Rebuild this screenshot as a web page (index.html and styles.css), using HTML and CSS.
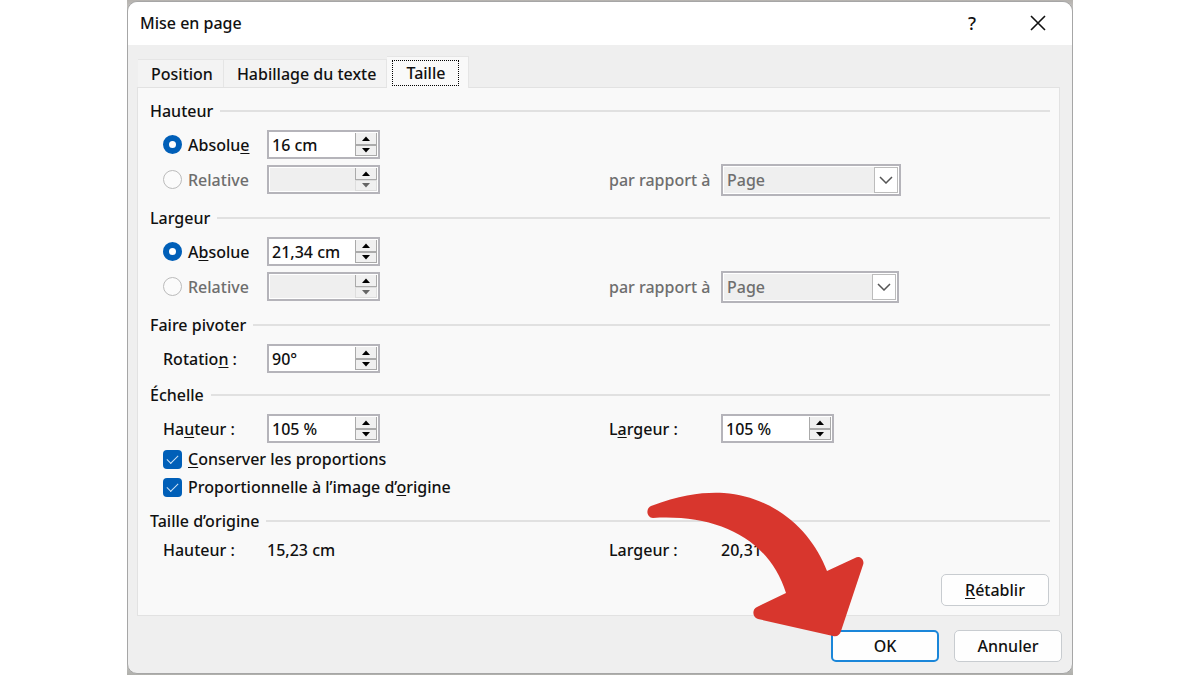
FILE: index.html
```html
<!DOCTYPE html>
<html lang="fr">
<head>
<meta charset="utf-8">
<title>Mise en page</title>
<link rel="stylesheet" href="styles.css">
</head>
<body>
<svg class="sprite" aria-hidden="true">
  <symbol id="up" viewBox="0 0 10 5"><path d="M1 5 5 0.5 9 5Z" fill="currentColor"/></symbol>
  <symbol id="down" viewBox="0 0 10 5"><path d="M1 0 5 4.5 9 0Z" fill="currentColor"/></symbol>
  <symbol id="chevron" viewBox="0 0 14 8"><path d="M1 1 7 7 13 1" fill="none" stroke="currentColor" stroke-width="1.5"/></symbol>
</svg>
<div class="backdrop">
<main class="dialog" role="dialog" aria-labelledby="title">
  <header class="titlebar">
    <h1 class="title" id="title">Mise en page</h1>
    <button class="caption-button help" aria-label="Aide">?</button>
    <button class="caption-button" aria-label="Fermer"><svg width="16" height="16" viewBox="0 0 16 16"><path d="M1 1 15 15M15 1 1 15" stroke="currentColor" stroke-width="1.6"/></svg></button>
  </header>
  <div class="content">
    <nav class="tabs" role="tablist">
      <button class="tab" role="tab">Position</button>
      <button class="tab" role="tab">Habillage du texte</button>
      <button class="tab tab-active" role="tab" aria-selected="true"><span class="focus">Taille</span></button>
    </nav>
    <form class="panel">
      <section class="section">
        <h2 class="heading">Hauteur</h2>
        <div class="fields">
          <label class="option"><input class="radio" type="radio" name="height" checked><span>Absolu<u>e</u></span></label>
          <div class="spinner"><input class="value" type="text" value="16 cm" aria-label="Hauteur absolue"><span class="steps"><button type="button" class="step" aria-label="Augmenter"><svg><use href="#up"/></svg></button><button type="button" class="step" aria-label="Diminuer"><svg><use href="#down"/></svg></button></span></div>
        </div>
        <div class="fields">
          <label class="option muted"><input class="radio" type="radio" name="height" disabled><span>Relative</span></label>
          <div class="spinner spinner-off"><input class="value" type="text" disabled aria-label="Hauteur relative"><span class="steps"><button type="button" class="step" aria-label="Augmenter"><svg><use href="#up"/></svg></button><button type="button" class="step" aria-label="Diminuer" disabled><svg><use href="#down"/></svg></button></span></div>
          <label class="muted" for="height-ref">par rapport à</label>
          <div class="combo"><select class="select" id="height-ref" disabled><option>Page</option></select><span class="arrow-box"><svg><use href="#chevron"/></svg></span></div>
        </div>
      </section>
      <section class="section">
        <h2 class="heading">Largeur</h2>
        <div class="fields">
          <label class="option"><input class="radio" type="radio" name="width" checked><span>A<u>b</u>solue</span></label>
          <div class="spinner"><input class="value" type="text" value="21,34 cm" aria-label="Largeur absolue"><span class="steps"><button type="button" class="step" aria-label="Augmenter"><svg><use href="#up"/></svg></button><button type="button" class="step" aria-label="Diminuer"><svg><use href="#down"/></svg></button></span></div>
        </div>
        <div class="fields">
          <label class="option muted"><input class="radio" type="radio" name="width" disabled><span>Relative</span></label>
          <div class="spinner spinner-off"><input class="value" type="text" disabled aria-label="Largeur relative"><span class="steps"><button type="button" class="step" aria-label="Augmenter"><svg><use href="#up"/></svg></button><button type="button" class="step" aria-label="Diminuer" disabled><svg><use href="#down"/></svg></button></span></div>
          <label class="muted" for="width-ref">par rapport à</label>
          <div class="combo combo-narrow"><select class="select" id="width-ref" disabled><option>Page</option></select><span class="arrow-box"><svg><use href="#chevron"/></svg></span></div>
        </div>
      </section>
      <section class="section">
        <h2 class="heading">Faire pivoter</h2>
        <div class="fields">
          <label for="rotation">Rotatio<u>n</u> :</label>
          <div class="spinner"><input class="value" id="rotation" type="text" value="90°"><span class="steps"><button type="button" class="step" aria-label="Augmenter"><svg><use href="#up"/></svg></button><button type="button" class="step" aria-label="Diminuer"><svg><use href="#down"/></svg></button></span></div>
        </div>
      </section>
      <section class="section section-tight">
        <h2 class="heading">Échelle</h2>
        <div class="fields">
          <label for="scale-h">Ha<u>u</u>teur :</label>
          <div class="spinner"><input class="value" id="scale-h" type="text" value="105 %"><span class="steps"><button type="button" class="step" aria-label="Augmenter"><svg><use href="#up"/></svg></button><button type="button" class="step" aria-label="Diminuer"><svg><use href="#down"/></svg></button></span></div>
          <label for="scale-w">L<u>a</u>rgeur :</label>
          <div class="spinner"><input class="value" id="scale-w" type="text" value="105 %"><span class="steps"><button type="button" class="step" aria-label="Augmenter"><svg><use href="#up"/></svg></button><button type="button" class="step" aria-label="Diminuer"><svg><use href="#down"/></svg></button></span></div>
        </div>
        <div class="checks">
          <label class="option"><input class="checkbox" type="checkbox" checked><span><u>C</u>onserver les proportions</span></label>
          <label class="option"><input class="checkbox" type="checkbox" checked><span>Proportionnelle à l’image d’<u>o</u>rigine</span></label>
        </div>
      </section>
      <section class="section">
        <h2 class="heading">Taille d’origine</h2>
        <div class="fields fields-text">
          <span>Hauteur :</span><span>15,23 cm</span><span>Largeur :</span><span>20,31 cm</span>
        </div>
      </section>
      <div class="reset"><button type="button" class="button"><span><u>R</u>établir</span></button></div>
    </form>
  </div>
  <footer class="footer">
    <button class="button button-default">OK</button>
    <button class="button">Annuler</button>
  </footer>
  <svg class="pointer" viewBox="647 492 217 145" aria-hidden="true"><path d="M651 506C683 494 705 492 724 493C775 497 812 531 827 571L855 558C860 555 865 560 863 565L841 631C840 635 837 637 833 636L758 619C752 617 752 609 757 607L786 593C769 538 716 514 653 518C647 518 645 509 651 506Z" fill="#d8362d"/></svg>
</main>
</div>
</body>
</html>
```
FILE: styles.css
```css
* { box-sizing: border-box; }

body {
  margin: 0;
  background: #fff;
  color: #111;
  font: 500 16px/20px "Noto Sans", "Open Sans", sans-serif;
}

button, input, select { font: inherit; color: inherit; }
button { padding: 0; }
u { text-decoration-thickness: 1px; text-underline-offset: 2px; }

.sprite { display: block; width: 0; height: 0; }

.backdrop {
  display: flex;
  min-height: 100vh;
  margin: 0 127px;
  padding: 1px 0;
  background: linear-gradient(#b5b2ae, #d6d6d6 20px, #d6d6d6 96%, #b0b0ac);
}

.dialog {
  position: relative;
  display: flex;
  flex: 1;
  flex-direction: column;
  border: 1px solid #a6a6a6;
  border-radius: 10px;
  background: #efefef;
}

.titlebar {
  display: flex;
  align-items: center;
  height: 43px;
  padding: 0 25px 2px 12px;
  border-radius: 10px 10px 0 0;
  background: #fff;
}

.title { flex: 1; margin: 0; font-size: 16px; font-weight: 500; }

.caption-button {
  display: grid;
  place-items: center;
  width: 18px;
  height: 24px;
  border: 0;
  background: none;
}

.help { margin-right: 48px; font-size: 18px; }

.content { padding: 11px 12px 0 9px; }

.tabs { display: flex; align-items: flex-end; padding-left: 1px; }

.tab {
  height: 28px;
  padding: 0 10px 0 13px;
  border: solid #e5e5e5;
  border-width: 1px 1px 0 0;
  background: #f3f3f3;
}

.tab-active {
  height: 32px;
  margin-bottom: -1px;
  padding: 0 9px 0 5px;
  background: #f9f9f9;
  z-index: 1;
}

.focus {
  display: block;
  padding: 2px 13px;
  border: 1px dotted #000;
}

.panel {
  padding: 13px 9px 9px 12px;
  border: 1px solid #e2e2e2;
  background: #f9f9f9;
}

.section { display: grid; gap: 6px; margin-bottom: 14px; }
.section:has(+ .section-tight) { margin-bottom: 12px; }

.heading {
  display: flex;
  align-items: center;
  gap: 7px;
  margin: 0 0 3px;
  font-size: 16px;
  font-weight: 500;
}

.heading::after { content: ""; flex: 1; height: 2px; background: #e1e1e1; }

.fields {
  display: grid;
  grid-template-columns: 104px 1fr 112px 329px;
  grid-template-rows: 29px;
  align-items: center;
  padding-left: 13px;
}

.fields-text { grid-template-rows: 20px; }
.option { display: flex; align-items: center; gap: 6px; }
.muted { color: #6e6e6e; }

.radio {
  appearance: none;
  width: 19px;
  height: 19px;
  margin: 0;
  border: 1px solid #bbb;
  border-radius: 50%;
  background: #fbfbfb;
}

.radio:checked { border: 6px solid #005fb8; background: #fff; }

.checkbox {
  appearance: none;
  width: 19px;
  height: 19px;
  margin: 0;
  border-radius: 4px;
  background: #005fb8;
}

.checkbox::before {
  content: "";
  display: block;
  width: 10px;
  height: 5px;
  margin: 5px 0 0 4px;
  border: solid #cfe4f7;
  border-width: 0 0 1px 1px;
  transform: rotate(-45deg);
}

.checks { display: grid; gap: 8px; padding-left: 13px; }

.spinner {
  display: flex;
  width: 113px;
  height: 29px;
  padding: 1px;
  border: 2px solid #b5b4ba;
  background: #fff;
}

.value {
  flex: 1;
  min-width: 0;
  padding: 0 0 0 2px;
  border: 0;
  background: #fff;
}

.spinner-off .value { background: #efefef; }
.steps { display: grid; grid-template-rows: 12px 11px; width: 22px; }

.step {
  display: grid;
  place-items: center;
  border: solid #aaa;
  border-width: 0 1px 1px;
  background: #f0f0f0;
  color: #000;
}

.step + .step { border-top: 1px solid #aaa; }
.step svg { width: 10px; height: 5px; }
.step:disabled { border-color: #ddd; color: #666; }

.combo {
  display: flex;
  width: 180px;
  height: 32px;
  padding: 1px;
  border: 2px solid #b5b4ba;
  background: #fff;
}

.combo-narrow { width: 178px; }

.select {
  appearance: none;
  flex: 1;
  min-width: 0;
  padding: 0 3px;
  border: 0;
  background: #efefef;
  color: #6e6e6e;
  opacity: 1;
}

.arrow-box {
  display: grid;
  place-items: center;
  width: 24px;
  border: 1px solid #bcbcbc;
  color: #555;
}

.arrow-box svg { width: 14px; height: 8px; }

.reset { display: flex; justify-content: flex-end; padding-right: 1px; }

.button {
  width: 108px;
  height: 32px;
  border: 1px solid #c8ccd0;
  border-radius: 5px;
  background: #fefefe;
}

.button-default { border: 2px solid #1a86d9; }

.footer {
  display: flex;
  justify-content: flex-end;
  gap: 15px;
  padding: 14px 10px 10px;
}

.pointer {
  position: absolute;
  right: 208px;
  bottom: 36px;
  width: 217px;
  height: 145px;
}
```
